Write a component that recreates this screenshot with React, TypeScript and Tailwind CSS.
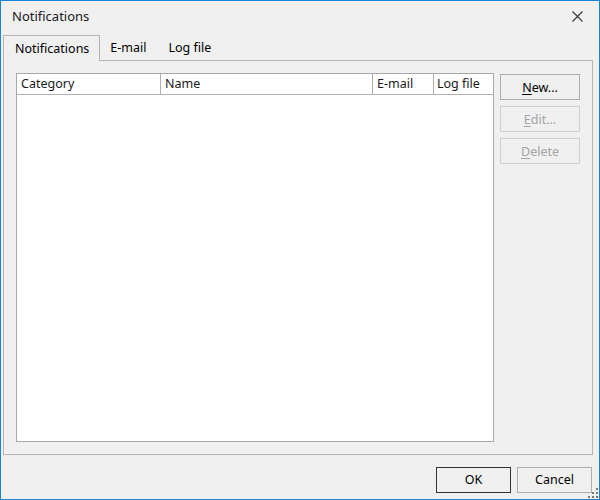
import React from 'react';

const font = "font-['Noto_Sans',sans-serif]";

function Mnemonic({ text }: { text: string }) {
  return (
    <>
      <span className="underline underline-offset-2">{text.charAt(0)}</span>
      {text.slice(1)}
    </>
  );
}

function SideButton({ label, disabled }: { label: string; disabled?: boolean }) {
  return (
    <button
      className={
        disabled
          ? 'w-[80px] h-[26px] pt-[2px] border border-[#cfcfcf] bg-[#f0f0f0] text-[#a3a3a3] text-[12.5px] leading-none flex items-center justify-center'
          : 'w-[80px] h-[26px] pt-[2px] border border-[#adadad] bg-[#f0f0f0] text-black text-[12.5px] leading-none flex items-center justify-center'
      }
    >
      <Mnemonic text={label} />
    </button>
  );
}

export default function App() {
  return (
    <div className={`${font} relative w-[600px] h-[500px] bg-[#f0f0f0] border border-[#1883d7] flex flex-col text-black select-none`}>
      {/* Title bar */}
      <div className="h-[33px] flex items-center justify-between pl-[11px] pr-[16px]">
        <span className="text-[13px] text-[#1a1a1a] mt-[-1px]">Notifications</span>
        <svg width="11" height="11" viewBox="0 0 11 11" className="mt-[-3px]">
          <path d="M0.5 0.5 L10.5 10.5 M10.5 0.5 L0.5 10.5" stroke="#333" strokeWidth="1.1" fill="none" />
        </svg>
      </div>

      {/* Tabs */}
      <div className="h-[26px] flex items-end pl-[2px] text-[12.5px]">
        <div className="relative z-10 h-[26px] -mb-px pl-[11px] pr-[10px] pt-[2px] border border-b-0 border-[#b5b5b5] bg-[#f0f0f0] flex items-center">
          Notifications
        </div>
        <div className="h-[26px] pl-[10px] pr-[11px] pt-[2px] flex items-center">E-mail</div>
        <div className="h-[26px] px-[11px] pt-[2px] flex items-center">Log file</div>
      </div>

      {/* Tab panel */}
      <div className="ml-[2px] w-[590px] h-[395px] border border-[#b5b5b5] p-[12px] flex gap-[6px]">
        <div className="w-[478px] h-[369px] border border-[#a8a8a8] bg-white flex flex-col">
          <div className="h-[21px] flex border-b border-[#b0b0b0] text-[12.5px] text-[#1a1a1a]">
            <div className="w-[144px] border-r border-[#b0b0b0] pl-[4px] flex items-center">Category</div>
            <div className="w-[212px] border-r border-[#b0b0b0] pl-[4px] flex items-center">Name</div>
            <div className="w-[61px] border-r border-[#b0b0b0] pl-[4px] flex items-center">E-mail</div>
            <div className="flex-1 pl-[3px] flex items-center">Log file</div>
          </div>
          <div className="flex-1" />
        </div>
        <div className="flex flex-col gap-[6px] pt-px">
          <SideButton label="New..." />
          <SideButton label="Edit..." disabled />
          <SideButton label="Delete" disabled />
        </div>
      </div>

      {/* Bottom buttons */}
      <div className="flex justify-end gap-[6px] pt-[12px] pr-[7px] text-[12.5px]">
        <button className="w-[75px] h-[26px] pt-px border border-[#333333] bg-[#f0f0f0] flex items-center justify-center leading-none">
          OK
        </button>
        <button className="w-[75px] h-[26px] pt-px border border-[#adadad] bg-[#f0f0f0] flex items-center justify-center leading-none">
          Cancel
        </button>
      </div>

      {/* Resize grip */}
      <svg width="12" height="12" viewBox="0 0 12 12" className="absolute right-0 bottom-0">
        <rect x="9" y="1" width="2" height="2" fill="#777" />
        <rect x="5" y="5" width="2" height="2" fill="#777" />
        <rect x="9" y="5" width="2" height="2" fill="#777" />
        <rect x="1" y="9" width="2" height="2" fill="#777" />
        <rect x="5" y="9" width="2" height="2" fill="#777" />
        <rect x="9" y="9" width="2" height="2" fill="#777" />
      </svg>
    </div>
  );
}
